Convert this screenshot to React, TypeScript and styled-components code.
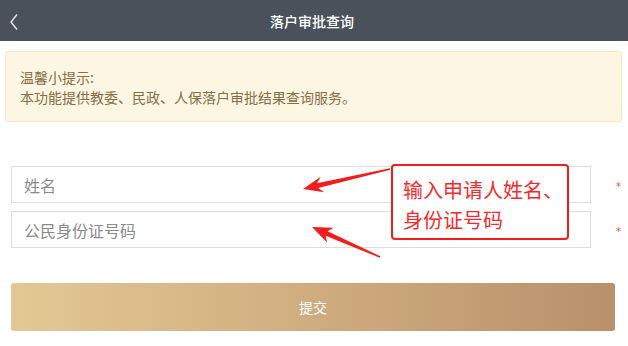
import React from "react";
import styled, { createGlobalStyle } from "styled-components";

const Global = createGlobalStyle`
  html, body { margin: 0; padding: 0; background: #fff; }
  body { font-family: "Noto Sans CJK SC", "Noto Sans", sans-serif; }
  * { box-sizing: border-box; }
`;

const Page = styled.div`
  position: relative;
  width: 628px;
  height: 346px;
  overflow: hidden;
  background: #fff;
`;

const Header = styled.header`
  height: 41px;
  background: #4a515b;
  display: grid;
  grid-template-columns: 40px 1fr 40px;
  align-items: center;
`;

const BackButton = styled.div`
  display: flex;
  align-items: center;
  padding-left: 8px;
  height: 41px;
`;

const Title = styled.h1`
  margin: 0;
  text-align: center;
  color: #fff;
  font-size: 14px;
  font-weight: 500;
  line-height: 20px;
  padding-right: 4px;
`;

const Tip = styled.div`
  margin: 10px 6px 0 5px;
  height: 71px;
  padding: 15px 14px;
  background: #fdf6e3;
  border: 1px solid #f7e8c6;
  border-radius: 3px;
  color: #8a6d45;
  font-size: 14px;
  line-height: 20px;
`;

const Form = styled.div`
  padding: 44px 7px 0 11px;
  display: flex;
  flex-direction: column;
  gap: 8px;
`;

const Row = styled.div`
  display: flex;
  align-items: center;
`;

const Input = styled.input`
  flex: 1;
  height: 37px;
  border: 1px solid #dedede;
  border-radius: 0;
  padding: 0 12px;
  font-family: inherit;
  font-size: 16px;
  color: #333;
  outline: none;
  &::placeholder { color: #8a8a8a; }
`;

const Required = styled.span`
  width: 30px;
  text-align: right;
  color: #f04848;
  font-family: "DejaVu Sans", sans-serif;
  font-size: 10px;
  line-height: 10px;
  padding-top: 5px;
`;

const Submit = styled.button`
  display: block;
  margin: 35px 13px 0 11px;
  width: 604px;
  height: 48px;
  border: none;
  border-radius: 3px;
  background: linear-gradient(90deg, #e3c894 0%, #d4b283 40%, #b8916b 100%);
  color: #fff;
  font-family: inherit;
  font-size: 14px;
`;

const Note = styled.div`
  position: absolute;
  left: 391px;
  top: 164px;
  width: 178px;
  height: 76px;
  border: 2.5px solid #f41c1c;
  border-radius: 4px;
  background: #fff;
  padding: 9px 0 0 10px;
  color: #f52b2b;
  font-size: 20px;
  line-height: 30px;
  white-space: nowrap;
`;

const Arrows = styled.svg`
  position: absolute;
  left: 0;
  top: 0;
  pointer-events: none;
`;

export default function App() {
  return (
    <Page>
      <Global />
      <Header>
        <BackButton>
          <svg width="12" height="20" viewBox="0 0 12 20">
            <polyline points="9,3.5 3,11 9,18.5" fill="none" stroke="#e6e8ea" strokeWidth="1.4" />
          </svg>
        </BackButton>
        <Title>落户审批查询</Title>
        <div />
      </Header>
      <Tip>
        <div>温馨小提示:</div>
        <div>本功能提供教委、民政、人保落户审批结果查询服务。</div>
      </Tip>
      <Form>
        <Row>
          <Input placeholder="姓名" />
          <Required>*</Required>
        </Row>
        <Row>
          <Input placeholder="公民身份证号码" />
          <Required>*</Required>
        </Row>
      </Form>
      <Submit>提交</Submit>
      <Arrows width="628" height="346" viewBox="0 0 628 346">
        <polygon
          fill="#f41c1c"
          points="303,189 320.7,176.7 317,183.2 389.8,168.2 390.2,169.8 318.2,188 324.3,192.3"
        />
        <polygon
          fill="#f41c1c"
          points="312,227 333.5,227.8 327.6,231.2 380.3,256.3 379.7,257.7 325.6,235.8 327.1,242.4"
        />
      </Arrows>
      <Note>
        <div>输入申请人姓名、</div>
        <div>身份证号码</div>
      </Note>
    </Page>
  );
}
